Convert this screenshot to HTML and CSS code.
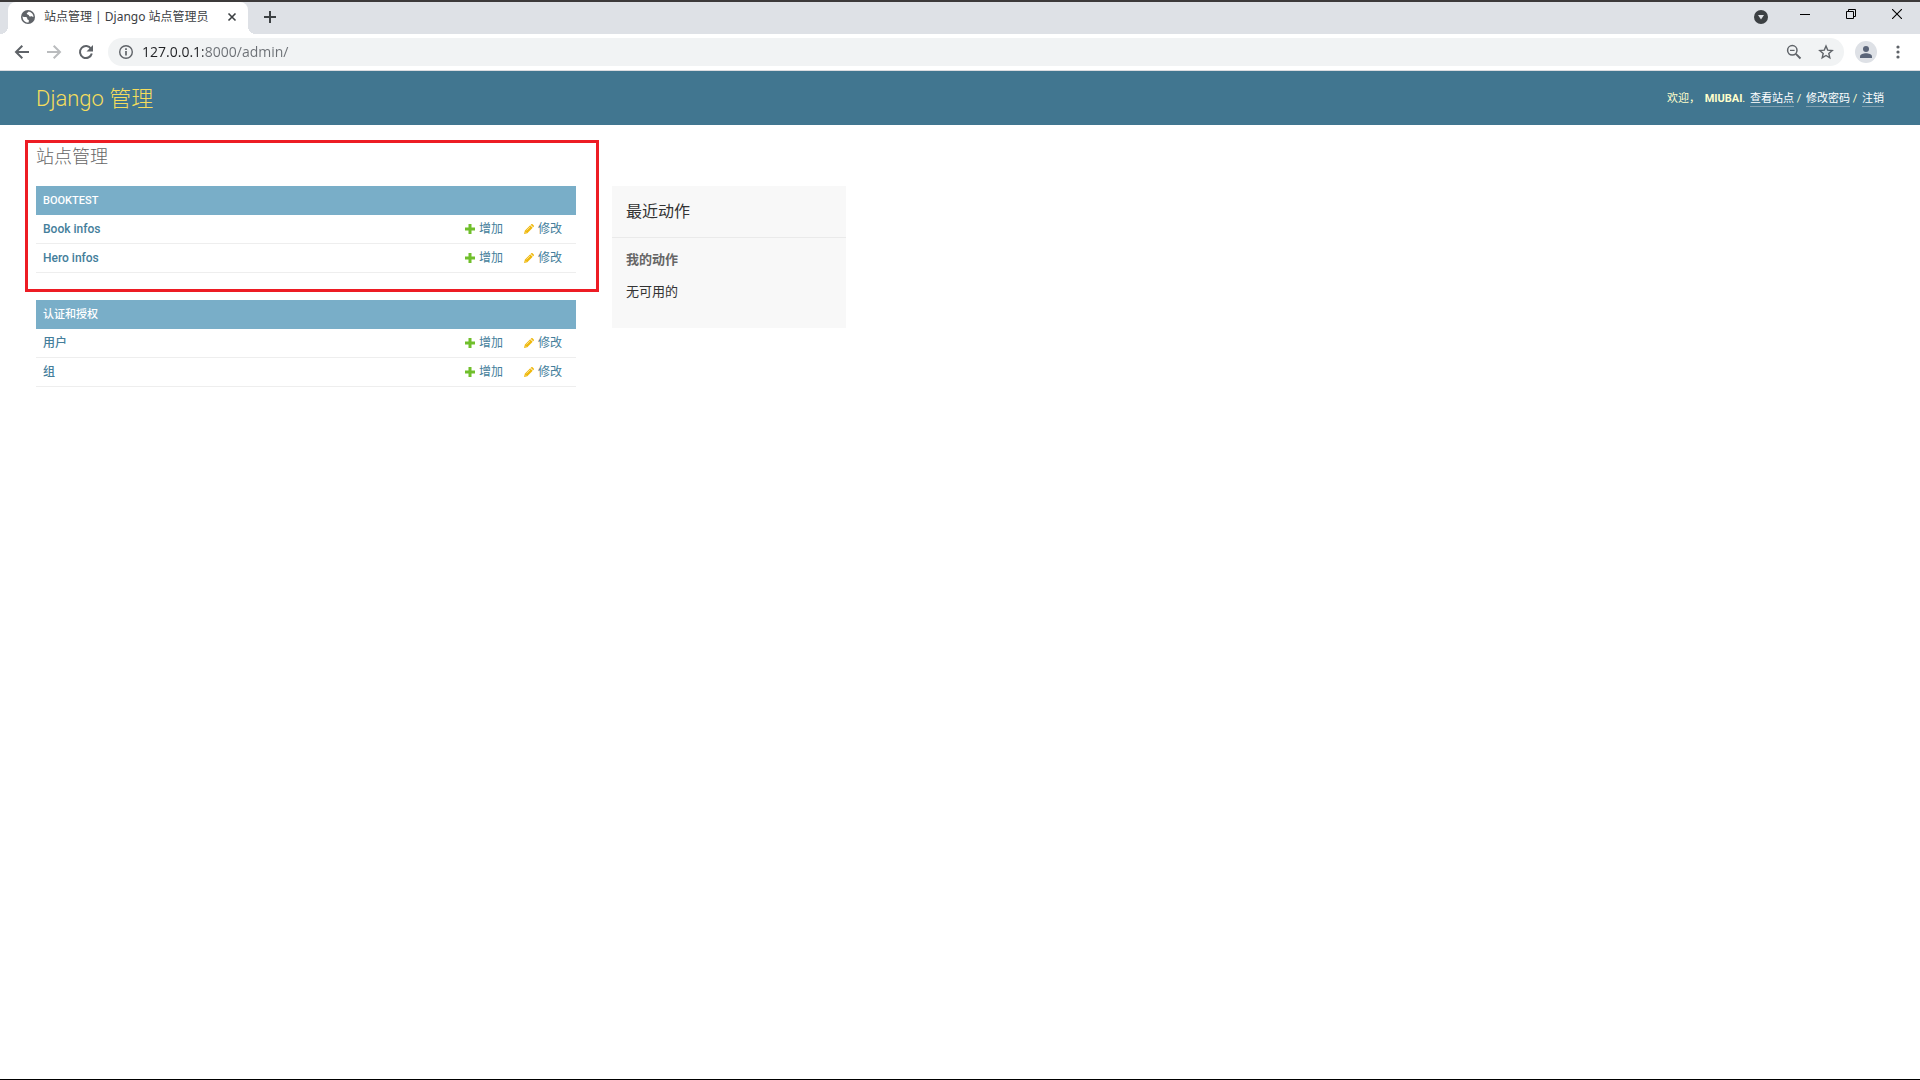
FILE: index.html
```html
<!DOCTYPE html>
<html lang="zh-CN">
<head>
    <meta charset="UTF-8">
    <meta name="viewport" content="width=device-width, initial-scale=1.0">
    <title>站点管理 | Django 站点管理员</title>
    <link rel="stylesheet" href="styles.css">
</head>
<body>
    <svg class="sprite" aria-hidden="true">
        <symbol id="icon-add" viewBox="0 0 10 10">
            <path d="M3.500 0h3v3.500H10v3H6.500V10h-3V6.500H0v-3h3.500z" fill="#70bf2b"/>
        </symbol>
        <symbol id="icon-change" viewBox="0 0 10 10">
            <path d="M0 10l.8-3.300L6.200 1.300l2.500 2.500-5.400 5.400z" fill="#efb80b"/>
            <path d="M6.700.8l.5-.5q.7-.6 1.400 0l1.100 1.100q.6.7 0 1.400l-.5.5z" fill="#efb80b"/>
            <path d="M2.500 6.500l3.700-3.700M1.100 7.700l1.200 1.200" stroke="#fff" stroke-opacity=".7" stroke-width=".7" fill="none"/>
        </symbol>
    </svg>

    <div class="tab-strip">
        <div class="tab">
            <svg class="favicon" viewBox="0 0 16 16">
                <circle cx="8" cy="8" r="7" fill="#5f6368"/>
                <path d="M2.600 7.200c1 .9 2 .8 3.200.8 1.300 0 1.400 1 1.500 1.900.1.700 1.600.5 1.600 1.500l-.3 2c-3.300.4-6.200-2-6-6.200z" fill="#fff"/>
                <path d="M8.600 2.500c-.3 1-.9 1.200-1.800 1.300-.2 1.200.5 1.700 1.300 1.900 1.100.3.900 1.500 1.900 1.800 1 .2 1.300-.4 2.100-.1l1.400.6c0-2.700-1.800-5-4.900-5.500z" fill="#fff"/>
            </svg>
            <span class="tab-title">站点管理 | Django 站点管理员</span>
            <button class="tab-close" aria-label="关闭标签页">
                <svg width="16" height="16" viewBox="0 0 16 16"><path d="M4.500 4.500l7 7M11.500 4.500l-7 7" stroke="#3c4043" stroke-width="1.600"/></svg>
            </button>
        </div>
        <button class="icon-button new-tab" aria-label="新标签页">
            <svg width="16" height="16" viewBox="0 0 16 16"><path d="M8 2v12M2 8h12" stroke="#3c4043" stroke-width="2"/></svg>
        </button>
        <div class="strip-space"></div>
        <button class="icon-button tab-search" aria-label="搜索标签页">
            <svg width="14" height="14" viewBox="0 0 14 14"><circle cx="7" cy="7" r="7" fill="#3c4043"/><path d="M4 5h6L7 9.500z" fill="#dee1e6"/></svg>
        </button>
        <div class="window-controls">
            <button aria-label="最小化"><svg width="10" height="11" viewBox="0 0 10 11"><path d="M0 5.500h10" stroke="#000"/></svg></button>
            <button aria-label="还原"><svg width="10" height="10" viewBox="0 0 10 10"><path d="M.5 2.500h7v7h-7zM2.500 2.500v-2h7v7h-2" stroke="#000" fill="none"/></svg></button>
            <button aria-label="关闭"><svg width="10" height="10" viewBox="0 0 10 10"><path d="M0 0l10 10M10 0L0 10" stroke="#000" stroke-width="1.100"/></svg></button>
        </div>
    </div>

    <div class="toolbar">
        <button class="icon-button" aria-label="后退">
            <svg width="16" height="16" viewBox="0 0 16 16"><path d="M15 8H2.500M8.300 1.700L2 8l6.300 6.300" stroke="#5f6368" stroke-width="2" fill="none"/></svg>
        </button>
        <button class="icon-button" aria-label="前进" disabled>
            <svg width="16" height="16" viewBox="0 0 16 16"><path d="M1 8h12.500M7.700 1.700L14 8l-6.300 6.300" stroke="#babcbe" stroke-width="2" fill="none"/></svg>
        </button>
        <button class="icon-button" aria-label="重新加载">
            <svg width="16" height="16" viewBox="0 0 16 16"><path d="M13.100 4.900A6 6 0 1 0 13.800 9.500" stroke="#5f6368" stroke-width="2" fill="none"/><path d="M15 1v6.500H8.500z" fill="#5f6368"/></svg>
        </button>
        <div class="omnibox">
            <button class="icon-button" aria-label="查看网站信息">
                <svg width="16" height="16" viewBox="0 0 16 16"><circle cx="8" cy="8" r="6.300" stroke="#5f6368" stroke-width="1.400" fill="none"/><path d="M8 7v4.500M8 4.300v1.700" stroke="#5f6368" stroke-width="1.700"/></svg>
            </button>
            <input class="address" type="text" aria-label="地址" value="127.0.0.1:8000/admin/">
            <button class="icon-button" aria-label="缩放">
                <svg width="16" height="16" viewBox="0 0 16 16"><circle cx="6.300" cy="6.300" r="4.700" stroke="#5f6368" stroke-width="1.500" fill="none"/><path d="M9.800 9.800l4.700 4.700" stroke="#5f6368" stroke-width="1.900"/><path d="M4 6.400h4.600" stroke="#5f6368" stroke-width="1.200"/></svg>
            </button>
            <button class="icon-button" aria-label="为此标签页添加书签">
                <svg width="16" height="16" viewBox="0 0 16 16"><path d="M8 2l1.700 4.100 4.500.4-3.400 2.900 1 4.400L8 11.500l-3.800 2.300 1-4.400-3.400-2.900 4.500-.4z" stroke="#5f6368" stroke-width="1.400" fill="none"/></svg>
            </button>
        </div>
        <button class="icon-button" aria-label="用户资料">
            <svg width="22" height="22" viewBox="0 0 22 22"><circle cx="11" cy="11" r="11" fill="#dee1e6"/><circle cx="11" cy="8" r="3" fill="#5a6478"/><path d="M5 17v-1.500c0-2.200 3.500-3.300 6-3.300s6 1.100 6 3.300V17z" fill="#5a6478"/></svg>
        </button>
        <button class="icon-button" aria-label="自定义及控制">
            <svg width="4" height="14" viewBox="0 0 4 14"><g fill="#5f6368"><circle cx="2" cy="2" r="1.600"/><circle cx="2" cy="7" r="1.600"/><circle cx="2" cy="12" r="1.600"/></g></svg>
        </button>
    </div>

    <header class="header">
        <div class="branding"><a href="#">Django 管理</a></div>
        <div class="user-tools">
            欢迎， <strong>MIUBAI</strong>.
            <a href="#">查看站点</a> /
            <a href="#">修改密码</a> /
            <a href="#">注销</a>
        </div>
    </header>

    <main class="content">
        <h1>站点管理</h1>
        <div class="columns">
            <div class="app-list">
                <table class="module">
                    <caption><a href="#">BOOKTEST</a></caption>
                    <tr>
                        <th scope="row"><a href="#">Book infos</a></th>
                        <td><a class="action" href="#"><svg class="icon"><use href="#icon-add"/></svg>增加</a></td>
                        <td><a class="action" href="#"><svg class="icon"><use href="#icon-change"/></svg>修改</a></td>
                    </tr>
                    <tr>
                        <th scope="row"><a href="#">Hero infos</a></th>
                        <td><a class="action" href="#"><svg class="icon"><use href="#icon-add"/></svg>增加</a></td>
                        <td><a class="action" href="#"><svg class="icon"><use href="#icon-change"/></svg>修改</a></td>
                    </tr>
                </table>
                <table class="module">
                    <caption><a href="#">认证和授权</a></caption>
                    <tr>
                        <th scope="row"><a href="#">用户</a></th>
                        <td><a class="action" href="#"><svg class="icon"><use href="#icon-add"/></svg>增加</a></td>
                        <td><a class="action" href="#"><svg class="icon"><use href="#icon-change"/></svg>修改</a></td>
                    </tr>
                    <tr>
                        <th scope="row"><a href="#">组</a></th>
                        <td><a class="action" href="#"><svg class="icon"><use href="#icon-add"/></svg>增加</a></td>
                        <td><a class="action" href="#"><svg class="icon"><use href="#icon-change"/></svg>修改</a></td>
                    </tr>
                </table>
            </div>
            <aside class="recent-actions">
                <h2>最近动作</h2>
                <h3>我的动作</h3>
                <p>无可用的</p>
            </aside>
        </div>
        <div class="highlight"></div>
    </main>
</body>
</html>
```

FILE: styles.css
```css
* {
    box-sizing: border-box;
}
body {
    margin: 0;
    min-height: 100vh;
    background: #fff;
    color: #333;
    border-bottom: 1px solid #000;
    font-family: Roboto, "Noto Sans CJK SC", sans-serif;
    font-size: 13px;
}
a {
    color: #447e9b;
    text-decoration: none;
}
button {
    padding: 0;
    border: none;
    background: none;
}
svg {
    display: block;
    flex: none;
}
.sprite {
    position: absolute;
    width: 0;
    height: 0;
}

/* browser window */
.tab-strip {
    display: flex;
    height: 34px;
    padding-left: 8px;
    border-top: 2px solid #3c3a3a;
    background: #dee1e6;
}
.tab {
    position: relative;
    display: flex;
    align-items: center;
    gap: 8px;
    width: 240px;
    padding: 0 8px 2px 12px;
    background: #fff;
    border-radius: 8px 8px 0 0;
}
.tab::before,
.tab::after {
    content: "";
    position: absolute;
    bottom: 0;
    width: 8px;
    height: 8px;
}
.tab::before {
    right: 100%;
    background: radial-gradient(circle at 0 0, transparent 8px, #fff 8px);
}
.tab::after {
    left: 100%;
    background: radial-gradient(circle at 100% 0, transparent 8px, #fff 8px);
}
.favicon {
    width: 16px;
    height: 16px;
}
.tab-title {
    flex: 1;
    color: #3c4043;
    font-family: "Noto Sans", "Noto Sans CJK SC", sans-serif;
    font-size: 12px;
    line-height: 18px;
    white-space: nowrap;
    overflow: hidden;
}
.icon-button {
    display: flex;
    flex: none;
    align-items: center;
    justify-content: center;
    width: 28px;
    height: 28px;
}
.new-tab,
.tab-search {
    height: 30px;
}
.new-tab {
    margin-left: 8px;
}
.strip-space {
    flex: 1;
}
.tab-search {
    margin-right: 7px;
}
.window-controls {
    display: flex;
}
.window-controls button {
    display: flex;
    align-items: center;
    justify-content: center;
    width: 46px;
    height: 24px;
}
.toolbar {
    display: flex;
    align-items: center;
    gap: 4px;
    height: 37px;
    padding: 0 8px;
    border-bottom: 1px solid #dadce0;
    background: #fff;
}
.omnibox {
    display: flex;
    flex: 1;
    align-items: center;
    height: 28px;
    margin: 0 4px;
    padding: 0 4px;
    border-radius: 14px;
    background: #f1f3f4;
}
.address {
    flex: 1;
    min-width: 0;
    height: 24px;
    margin-left: 2px;
    padding: 0 0 2px;
    border: none;
    outline: none;
    /* host is darker than the rest of the address */
    background: linear-gradient(to right, #202124 61px, #6b6f74 61px);
    background-clip: text;
    color: transparent;
    font-family: "Open Sans", sans-serif;
    font-size: 14px;
}
.address + .icon-button {
    margin-right: 4px;
}

/* admin site */
.header {
    display: flex;
    align-items: center;
    justify-content: space-between;
    min-height: 54px;
    padding: 2px 36px 0;
    background: #417690;
    color: #ffc;
}
.branding {
    font-size: 22px;
    font-weight: 300;
    line-height: 26px;
}
.branding a {
    color: #f5dd5d;
}
.user-tools {
    font-size: 11px;
    font-weight: 400;
    line-height: 14px;
}
.user-tools strong {
    margin-left: 2px;
    font-weight: 700;
}
.user-tools a {
    display: inline-block;
    margin-left: 2px;
    border-bottom: 1px solid #7f9fb0;
    color: #fff;
}
.content {
    position: relative;
    padding: 20px 36px;
}
h1 {
    margin: 0 0 17px;
    color: #666;
    font-size: 18px;
    font-weight: 300;
    line-height: 24px;
}
.columns {
    display: flex;
    align-items: flex-start;
    gap: 36px;
}
.app-list {
    flex: 0 1 540px;
}
.module {
    width: 100%;
    margin-bottom: 27px;
    border-collapse: collapse;
    font-size: 12px;
    line-height: 16px;
}
.module caption {
    padding: 7px 7px 6px;
    background: #79aec8;
    font-size: 11px;
    font-weight: 500;
    text-align: left;
}
.module caption a {
    color: #fff;
}
.module th,
.module td {
    padding: 6px 7px;
    border-bottom: 1px solid #eee;
    text-align: left;
    white-space: nowrap;
}
.module th {
    width: 100%;
    font-weight: 500;
}
.module td {
    padding-right: 14px;
    font-weight: 400;
}
.action {
    display: flex;
    align-items: center;
    gap: 4px;
}
.icon {
    width: 10px;
    height: 10px;
}
.recent-actions {
    flex: 0 1 234px;
    padding-bottom: 27px;
    background: #f8f8f8;
}
.recent-actions h2 {
    margin: 0 0 13px;
    padding: 16px 14px;
    border-bottom: 1px solid #eaeaea;
    font-size: 16px;
    font-weight: 400;
    line-height: 19px;
}
.recent-actions h3,
.recent-actions p {
    margin: 0 14px;
    font-size: 13px;
    line-height: 18px;
}
.recent-actions h3 {
    margin-bottom: 14px;
    color: #666;
    font-weight: 700;
}
/* red frame laid over the first app */
.highlight {
    position: absolute;
    top: 15px;
    left: 25px;
    width: 574px;
    height: 152px;
    border: 3px solid #ed1c24;
    pointer-events: none;
}
```
